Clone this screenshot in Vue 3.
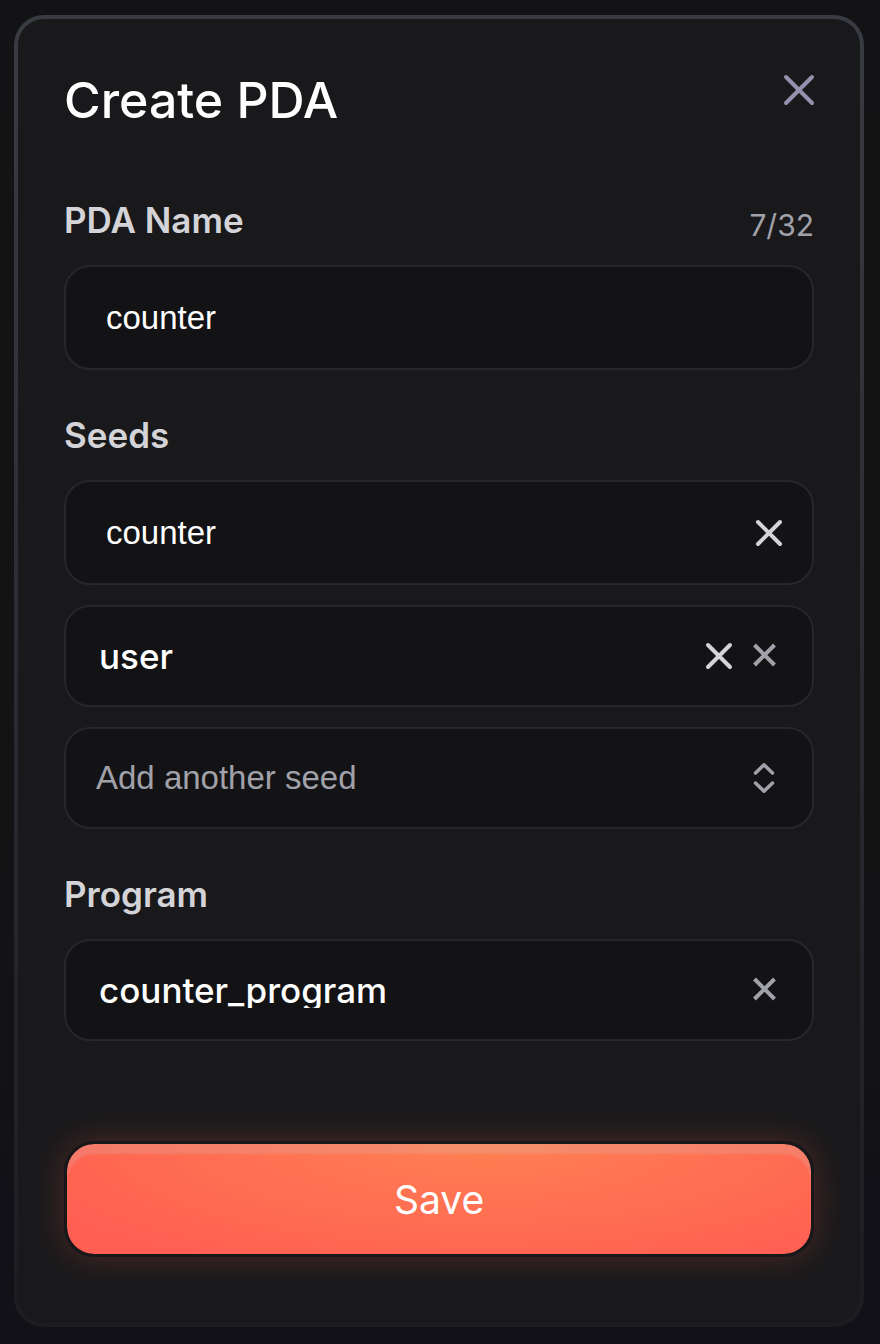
<script setup>
import { computed, ref } from 'vue'

const maxLength = 32
const name = ref('counter')
const firstSeed = ref('counter')
const secondSeed = ref('user')
const nextSeed = ref('')
const program = ref('counter_program')
const used = computed(() => `${name.value.length}/${maxLength}`)
</script>

<template>
  <div class="page">
    <form class="card" role="dialog" aria-labelledby="dialog-title" @submit.prevent>
      <header class="head">
        <h1 id="dialog-title">Create PDA</h1>
        <button class="icon-button close" type="button" aria-label="Close">
          <svg width="32" height="32" viewBox="0 0 32 32"><path d="M3 3 29 29M29 3 3 29" /></svg>
        </button>
      </header>

      <section class="group">
        <div class="label-row">
          <label class="label" for="pda-name">PDA Name</label>
          <span class="count">{{ used }}</span>
        </div>
        <div class="field tall">
          <input id="pda-name" v-model="name" class="plain" type="text" :maxlength="maxLength" />
        </div>
      </section>

      <section class="group">
        <div class="label-row">
          <label class="label" for="seed-1">Seeds</label>
        </div>
        <div class="seeds">
          <div class="field tall">
            <input id="seed-1" v-model="firstSeed" class="plain" type="text" />
            <button class="icon-button remove" type="button" aria-label="Remove seed counter" @click="firstSeed = ''">
              <svg width="28" height="28" viewBox="0 0 28 28"><path d="M3 3 25 25M25 3 3 25" /></svg>
            </button>
          </div>
          <div class="field">
            <input v-model="secondSeed" class="picked" type="text" aria-label="Second seed" />
            <button class="icon-button remove" type="button" aria-label="Remove seed user">
              <svg width="28" height="28" viewBox="0 0 28 28"><path d="M3 3 25 25M25 3 3 25" /></svg>
            </button>
            <button class="icon-button clear" type="button" aria-label="Clear selection" @click="secondSeed = ''">
              <svg width="28" height="28" viewBox="0 0 28 28"><path d="M4.5 3 24.5 23M24.5 3 4.5 23" /></svg>
            </button>
          </div>
          <div class="field choose">
            <select v-model="nextSeed" aria-label="Add another seed">
              <option value="">Add another seed</option>
            </select>
            <svg class="chevrons" width="28" height="32" viewBox="0 0 28 32" aria-hidden="true">
              <path d="M5.5 11 14 2.8 22.5 11M5.5 21 14 29.2 22.5 21" />
            </svg>
          </div>
        </div>
      </section>

      <section class="group">
        <div class="label-row">
          <label class="label" for="program">Program</label>
        </div>
        <div class="field">
          <input id="program" v-model="program" class="picked" type="text" />
          <button class="icon-button clear" type="button" aria-label="Clear program" @click="program = ''">
            <svg width="28" height="28" viewBox="0 0 28 28"><path d="M4.5 3 24.5 23M24.5 3 4.5 23" /></svg>
          </button>
        </div>
      </section>

      <button class="save" type="submit">Save</button>
    </form>
  </div>
</template>

<style>
body {
  background: #131316;
}
</style>

<style scoped>
.page {
  box-sizing: border-box;
  min-height: 100vh;
  padding: 15px 16px 17px 14px;
  background: linear-gradient(#131315, #131314 60%, #121117 90%);
  font-family: Inter, sans-serif;
}

.card {
  display: flex;
  flex-direction: column;
  gap: 44px;
  padding: 51px 46px 66px;
  border: 4px solid transparent;
  border-radius: 30px;
  background:
    linear-gradient(#19191b, #19191b) padding-box,
    linear-gradient(#393b43, #2a2931 55%, #1d1d20) border-box;
}

.head {
  display: flex;
  justify-content: space-between;
  align-items: flex-start;
  margin-bottom: 25px;
}

h1 {
  margin: 0;
  color: #fff;
  font-size: 50px;
  font-weight: 500;
  line-height: 60px;
}

.icon-button {
  display: block;
  flex: none;
  padding: 0;
  border: 0;
  background: none;
  cursor: pointer;
}

svg {
  display: block;
  fill: none;
  stroke: currentColor;
  stroke-width: 4;
  stroke-linecap: round;
  stroke-linejoin: round;
}

.close {
  margin: 4px -1px 0 0;
  color: #9491ae;
}

.remove {
  color: #d4d4d8;
}

.clear {
  color: #a1a1aa;
}

.clear svg {
  stroke-linecap: butt;
}

.label-row {
  display: flex;
  justify-content: space-between;
  margin-bottom: 22px;
}

.label {
  padding-bottom: 2px;
  color: #d4d4d8;
  font-size: 35px;
  font-weight: 600;
  line-height: 42px;
}

.count {
  padding-top: 8px;
  color: #a1a1aa;
  font-size: 30px;
  line-height: 36px;
}

.seeds {
  display: grid;
  gap: 20px;
}

.field {
  display: flex;
  align-items: center;
  gap: 17px;
  box-sizing: border-box;
  min-height: 102px;
  padding: 0 34px 0 33px;
  border: 2px solid #27272a;
  border-radius: 26px;
  background: #131315;
}

.field.tall {
  min-height: 105px;
  padding: 0 29px 0 40px;
}

input,
select {
  flex: 1;
  min-width: 0;
  padding: 0;
  border: 0;
  outline: 0;
  background: none;
  color: #fff;
}

.plain {
  height: 40px;
  font: 33px "Liberation Sans", Arial, sans-serif;
}

.picked {
  height: 36px;
  font: 500 35px Inter, sans-serif;
}

.field.choose {
  position: relative;
  padding: 0;
}

select {
  height: 98px;
  padding: 0 80px 2px 30px;
  appearance: none;
  color: #a1a1aa;
  font: 33px "Liberation Sans", Arial, sans-serif;
}

.chevrons {
  position: absolute;
  right: 34px;
  color: #a1a1aa;
  pointer-events: none;
}

.chevrons path {
  stroke-width: 3.5;
}

.save {
  min-height: 116px;
  margin-top: 56px;
  border: 3px solid #18181a;
  border-radius: 30px;
  background: radial-gradient(68% 125% at 56% 0, #ff8052, #ff5f52) padding-box;
  box-shadow:
    0 0 32px rgba(255, 95, 82, 0.24),
    inset 0 10px 2px rgba(207, 207, 207, 0.2);
  color: #fff;
  font: 39px Inter, sans-serif;
  cursor: pointer;
}
</style>
